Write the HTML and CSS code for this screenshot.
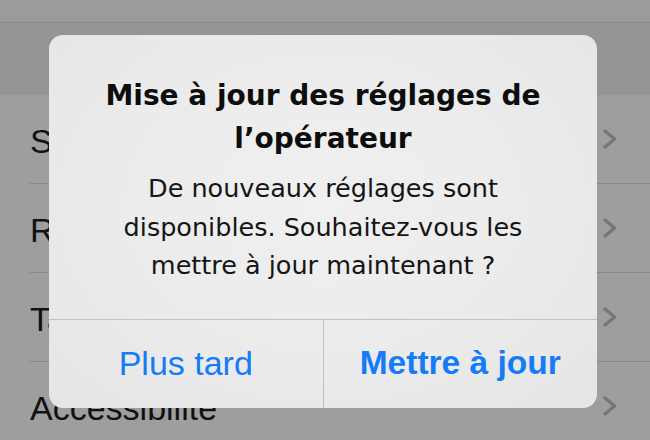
FILE: index.html
```html
<!DOCTYPE html>
<html lang="fr">
<head>
<meta charset="utf-8">
<title>Mise à jour des réglages</title>
<link rel="stylesheet" href="styles.css">
</head>
<body>
<div class="screen">
  <div class="topbar"></div>
  <div class="section-header"></div>
  <ul class="list">
    <li class="row"><div class="row-inner"><span class="label">Sons</span><svg class="chev" width="14" height="20" viewBox="0 0 14 20"><polyline points="2,2 11.5,10 2,18" fill="none" stroke="#767676" stroke-width="3.4" stroke-linecap="round" stroke-linejoin="round"/></svg></div></li>
    <li class="row"><div class="row-inner"><span class="label">Réseau</span><svg class="chev" width="14" height="20" viewBox="0 0 14 20"><polyline points="2,2 11.5,10 2,18" fill="none" stroke="#767676" stroke-width="3.4" stroke-linecap="round" stroke-linejoin="round"/></svg></div></li>
    <li class="row"><div class="row-inner"><span class="label">Taille du texte</span><svg class="chev" width="14" height="20" viewBox="0 0 14 20"><polyline points="2,2 11.5,10 2,18" fill="none" stroke="#767676" stroke-width="3.4" stroke-linecap="round" stroke-linejoin="round"/></svg></div></li>
    <li class="row"><div class="row-inner"><span class="label">Accessibilité</span><svg class="chev" width="14" height="20" viewBox="0 0 14 20"><polyline points="2,2 11.5,10 2,18" fill="none" stroke="#767676" stroke-width="3.4" stroke-linecap="round" stroke-linejoin="round"/></svg></div></li>
  </ul>

  <div class="alert">
    <div class="alert-body">
      <h1 class="alert-title">Mise à jour des réglages de l’opérateur</h1>
      <p class="alert-message">De nouveaux réglages sont disponibles. Souhaitez-vous les mettre à jour maintenant ?</p>
    </div>
    <div class="alert-actions">
      <button class="alert-btn">Plus tard</button>
      <button class="alert-btn primary">Mettre à jour</button>
    </div>
  </div>
</div>
</body>
</html>
```
FILE: styles.css
```css
* { box-sizing: border-box; }
html, body { margin: 0; padding: 0; }
body { background: #9e9e9e; }

.screen {
  position: relative;
  width: 650px;
  height: 440px;
  overflow: hidden;
  background: #9e9e9e;
  font-family: "Liberation Sans", Arial, sans-serif;
}

.topbar {
  height: 23px;
  background: #9b9b9b;
  border-bottom: 1px solid #878787;
}

.section-header {
  height: 72px;
  background: #959595;
}

.list {
  list-style: none;
  margin: 0;
  padding: 0;
  background: #9e9e9e;
}

.row {
  padding-left: 30px;
  height: 89px;
}

.row-inner {
  height: 89px;
  display: flex;
  align-items: center;
  justify-content: space-between;
  padding-right: 33px;
  border-bottom: 1px solid #878787;
}

.label {
  font-size: 34px;
  color: #111;
  padding-top: 4px;
}

.chev { display: block; }

.alert {
  position: absolute;
  left: 49px;
  top: 35px;
  width: 548px;
  height: 373px;
  border-radius: 14px;
  background: radial-gradient(ellipse at 50% 45%, #f0f0f0 0%, #ebebeb 55%, #e5e5e5 100%);
  display: flex;
  flex-direction: column;
  overflow: hidden;
}

.alert-body {
  flex: 1;
  padding: 39px 40px 0;
  text-align: center;
}

.alert-title {
  margin: 0;
  font-family: "DejaVu Sans", sans-serif;
  font-weight: bold;
  font-size: 28px;
  line-height: 43px;
  color: #0d0d0d;
}

.alert-message {
  margin: 9px 0 0;
  font-family: "DejaVu Sans", sans-serif;
  font-size: 25.5px;
  line-height: 38.5px;
  color: #151515;
}

.alert-actions {
  height: 89px;
  display: flex;
  border-top: 1px solid #c2c2c2;
}

.alert-btn {
  flex: 1;
  margin: 0;
  border: 0;
  background: transparent;
  font-family: "Liberation Sans", Arial, sans-serif;
  font-size: 34px;
  color: #167cf5;
  padding: 0 0 2px;
}

.alert-btn + .alert-btn {
  border-left: 1px solid #c2c2c2;
}

.alert-btn.primary {
  font-weight: bold;
  font-size: 33.5px;
}
```
